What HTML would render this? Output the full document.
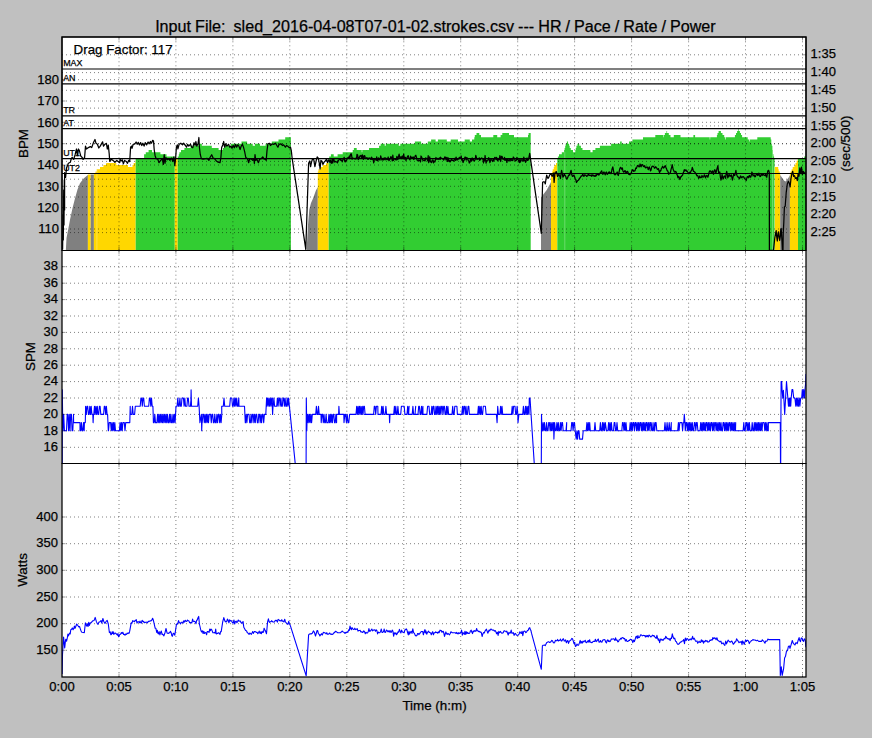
<!DOCTYPE html>
<html lang="en"><head><meta charset="utf-8"><title>HR / Pace / Rate / Power</title>
<style>html,body{margin:0;padding:0;background:#c0c0c0;}body{width:872px;height:738px;overflow:hidden;}</style></head>
<body>
<svg width="872" height="738" viewBox="0 0 872 738" style="display:block;font-family:'Liberation Sans', Arial, Helvetica, sans-serif">
<rect width="872" height="738" fill="#c0c0c0"/>
<defs><clipPath id="c1"><rect x="62.0" y="37.0" width="744.0" height="213.5"/></clipPath><clipPath id="c2"><rect x="62.0" y="250.33" width="744.0" height="213.6"/></clipPath><clipPath id="c3"><rect x="62.0" y="463.67" width="744.0" height="213.3"/></clipPath></defs>
<rect x="62.0" y="37.0" width="744.0" height="640.0" fill="#fff"/>
<g clip-path="url(#c1)">
<polygon points="65.9,251.3 65.9,249.1 66.5,238 68.4,228.4 70.2,218.7 72.6,207.7 75.1,198 77.5,189.4 80,183.3 83.6,178.4 87.3,175.4 87.9,174.8 87.9,251.3" fill="#808080"/>
<polygon points="87.9,251.3 87.9,174.6 90.7,174.6 90.7,251.3" fill="#ffd700"/>
<polygon points="90.7,251.3 90.7,174.6 93.9,174.6 93.9,251.3" fill="#808080"/>
<polygon points="93.9,251.3 93.9,173.5 95.5,173.5 95.5,171.4 96.7,171.4 96.7,169.3 100,169.3 100,167.1 103.4,167.1 103.4,165 106.2,165 106.2,162.9 116.3,162.9 116.3,165 128,165 128,167.1 132.5,167.1 132.5,165 133.6,165 133.6,162.9 135.3,162.9 135.3,160.7 135.7,160.7 135.7,251.3" fill="#ffd700"/>
<polygon points="135.7,251.3 135.7,158.6 144.1,158.6 144.1,154.3 145.8,154.3 145.8,152.2 148.6,152.2 148.6,150.1 152,150.1 152,152.2 160.4,152.2 160.4,154.3 166.5,154.3 166.5,156.5 174.8,156.5 174.8,251.3" fill="#32cd32"/>
<polygon points="174.8,251.3 174.8,158.7 177.7,158.7 177.7,251.3" fill="#ffd700"/>
<polygon points="177.7,251.3 177.7,156.5 178.8,156.5 178.8,154.3 179.4,154.3 179.4,152.2 181,152.2 181,150.1 184.4,150.1 184.4,147.9 190.6,147.9 190.6,145.8 198.4,145.8 198.4,143.7 201.8,143.7 201.8,145.8 211.8,145.8 211.8,147.9 218.6,147.9 218.6,150.1 223,150.1 223,147.9 224.7,147.9 224.7,145.8 230.9,145.8 230.9,143.7 241.5,143.7 241.5,141.5 247.1,141.5 247.1,143.7 252.7,143.7 252.7,145.8 255,145.8 255,143.7 260,143.7 260,145.8 265.6,145.8 265.6,143.7 271.8,143.7 271.8,141.5 278.5,141.5 278.5,139.4 285.2,139.4 285.2,137.3 290.9,137.3 290.9,251.3" fill="#32cd32"/>
<polygon points="306.7,251.3 306.7,248.3 308,225 309.3,209.5 311,203 312.8,199 316,190.2 317.8,187 317.8,251.3" fill="#808080"/>
<polygon points="317.8,251.3 317.8,171.4 318.4,171.4 318.4,169.3 320.6,169.3 320.6,167.1 322.8,167.1 322.8,165 326.2,165 326.2,162.9 328.7,162.9 328.7,251.3" fill="#ffd700"/>
<polygon points="328.7,251.3 328.7,158.6 329.2,158.6 329.2,156.5 330.9,156.5 330.9,154.3 333.7,154.3 333.7,156.5 337.6,156.5 337.6,154.3 342.7,154.3 342.7,152.2 352.7,152.2 352.7,150.1 353.9,150.1 353.9,147.9 356.7,147.9 356.7,150.1 361.7,150.1 361.7,152.2 362.3,152.2 362.3,150.1 369,150.1 369,147.9 379.1,147.9 379.1,145.8 380.7,145.8 380.7,143.7 384.7,143.7 384.7,145.8 385.8,145.8 385.8,143.7 398.7,143.7 398.7,145.8 400.3,145.8 400.3,143.7 414.9,143.7 414.9,141.5 421.1,141.5 421.1,143.7 427.8,143.7 427.8,141.5 431.1,141.5 431.1,139.4 435.6,139.4 435.6,141.5 437.9,141.5 437.9,139.4 446.8,139.4 446.8,141.5 450.7,141.5 450.7,139.4 458,139.4 458,141.5 464.7,141.5 464.7,139.4 469.8,139.4 469.8,141.5 472,141.5 472,139.4 474.3,139.4 474.3,137.3 474.8,137.3 474.8,135.1 476.5,135.1 476.5,133 479.3,133 479.3,135.1 481,135.1 481,137.3 493.3,137.3 493.3,135.1 497.2,135.1 497.2,137.3 500.6,137.3 500.6,135.1 502.3,135.1 502.3,133 509,133 509,135.1 514,135.1 514,137.3 528,137.3 528,135.1 528.6,135.1 528.6,133 530.7,133 530.7,251.3" fill="#32cd32"/>
<polygon points="541,251.3 541,197.4 544,193.4 546.7,190 550,183.9 551,182 551,251.3" fill="#808080"/>
<polygon points="551,251.3 551,173.5 552.1,173.5 552.1,171.4 552.7,171.4 552.7,169.3 553.8,169.3 553.8,167.1 554.4,167.1 554.4,165 556,165 556,162.9 557.2,162.9 557.2,160.7 557.2,160.7 557.2,251.3" fill="#ffd700"/>
<polygon points="557.3,251.3 557.3,158.6 557.9,158.6 557.9,156.5 559,156.5 559,154.3 561.8,154.3 561.8,152.2 564.1,152.2 564.1,150.1 564.6,150.1 564.6,147.9 565.2,147.9 565.2,145.8 565.7,145.8 565.7,143.7 566.9,143.7 566.9,141.5 568,141.5 568,143.7 569.1,143.7 569.1,145.8 569.7,145.8 569.7,147.9 570.8,147.9 570.8,150.1 573,150.1 573,152.2 575.3,152.2 575.3,150.1 575.8,150.1 575.8,147.9 576.4,147.9 576.4,145.8 577.5,145.8 577.5,143.7 579.2,143.7 579.2,145.8 580.9,145.8 580.9,147.9 582.5,147.9 582.5,150.1 590.4,150.1 590.4,152.2 592.6,152.2 592.6,150.1 595.4,150.1 595.4,147.9 599.9,147.9 599.9,145.8 611.1,145.8 611.1,143.7 620.1,143.7 620.1,141.5 621.7,141.5 621.7,143.7 629,143.7 629,141.5 632.4,141.5 632.4,139.4 643,139.4 643,137.3 655.3,137.3 655.3,135.1 663.2,135.1 663.2,137.3 663.7,137.3 663.7,135.1 664.9,135.1 664.9,133 666.5,133 666.5,130.9 667.1,130.9 667.1,133 668.8,133 668.8,135.1 670.5,135.1 670.5,137.3 673.8,137.3 673.8,135.1 680.5,135.1 680.5,137.3 693.4,137.3 693.4,135.1 695.1,135.1 695.1,137.3 709.7,137.3 709.7,139.4 710.2,139.4 710.2,137.3 716.9,137.3 716.9,135.1 717.5,135.1 717.5,133 718.6,133 718.6,130.9 720.9,130.9 720.9,133 722.5,133 722.5,135.1 724.2,135.1 724.2,137.3 725.3,137.3 725.3,139.4 725.9,139.4 725.9,137.3 734.9,137.3 734.9,135.1 736,135.1 736,133 737.1,133 737.1,130.9 738.2,130.9 738.2,128.7 738.8,128.7 738.8,130.9 739.9,130.9 739.9,133 741,133 741,135.1 742.1,135.1 742.1,137.3 747.7,137.3 747.7,139.4 749.4,139.4 749.4,141.5 750,141.5 750,139.4 757.3,139.4 757.3,137.3 770.7,137.3 770.7,139.4 771.3,139.4 771.3,143.7 771.8,143.7 771.8,145.8 772.4,145.8 772.4,150.1 772.9,150.1 772.9,154.3 773.5,154.3 773.5,156.5 774.1,156.5 774.1,158.6 774.7,158.6 774.7,251.3" fill="#32cd32"/>
<polygon points="774.8,251.3 774.8,167.1 778.2,167.1 778.2,169.3 778.7,169.3 778.7,171.4 779.8,171.4 779.8,173.5 780.2,173.5 780.2,251.3" fill="#ffd700"/>
<polygon points="780.2,251.3 780.2,175 784.2,180.7 785.6,181.6 789,177 789.9,175 789.9,251.3" fill="#808080"/>
<polygon points="789.9,251.3 789.9,173.5 790.5,173.5 790.5,171.4 791.6,171.4 791.6,169.3 792.7,169.3 792.7,167.1 794.4,167.1 794.4,165 795.5,165 795.5,162.9 796.6,162.9 796.6,160.7 797.7,160.7 797.7,158.6 798,158.6 798,251.3" fill="#ffd700"/>
<polygon points="798,251.3 798,158.6 804.2,158.6 804.2,156.5 806,156.5 806,251.3" fill="#32cd32"/>
<path d="M564.8 152V251M772.5 150V251M774.3 160V251M96.9 170V251" stroke="#fff" stroke-opacity="0.4" stroke-width="0.7" fill="none"/>
</g>
<path d="M62.0 229H806.0" stroke="#000" stroke-width="0.5" stroke-dasharray="1 3" fill="none"/>
<path d="M62.0 207.7H806.0" stroke="#000" stroke-width="0.5" stroke-dasharray="1 3" fill="none"/>
<path d="M62.0 186.3H806.0" stroke="#000" stroke-width="0.5" stroke-dasharray="1 3" fill="none"/>
<path d="M62.0 165H806.0" stroke="#000" stroke-width="0.5" stroke-dasharray="1 3" fill="none"/>
<path d="M62.0 143.7H806.0" stroke="#000" stroke-width="0.5" stroke-dasharray="1 3" fill="none"/>
<path d="M62.0 122.3H806.0" stroke="#000" stroke-width="0.5" stroke-dasharray="1 3" fill="none"/>
<path d="M62.0 101H806.0" stroke="#000" stroke-width="0.5" stroke-dasharray="1 3" fill="none"/>
<path d="M62.0 79.7H806.0" stroke="#000" stroke-width="0.5" stroke-dasharray="1 3" fill="none"/>
<path d="M62.0 54.8H806.0" stroke="#000" stroke-width="0.5" stroke-dasharray="1 3" fill="none"/>
<path d="M62.0 72.6H806.0" stroke="#000" stroke-width="0.5" stroke-dasharray="1 3" fill="none"/>
<path d="M62.0 90.3H806.0" stroke="#000" stroke-width="0.5" stroke-dasharray="1 3" fill="none"/>
<path d="M62.0 108.1H806.0" stroke="#000" stroke-width="0.5" stroke-dasharray="1 3" fill="none"/>
<path d="M62.0 125.9H806.0" stroke="#000" stroke-width="0.5" stroke-dasharray="1 3" fill="none"/>
<path d="M62.0 143.7H806.0" stroke="#000" stroke-width="0.5" stroke-dasharray="1 3" fill="none"/>
<path d="M62.0 161.4H806.0" stroke="#000" stroke-width="0.5" stroke-dasharray="1 3" fill="none"/>
<path d="M62.0 179.2H806.0" stroke="#000" stroke-width="0.5" stroke-dasharray="1 3" fill="none"/>
<path d="M62.0 197H806.0" stroke="#000" stroke-width="0.5" stroke-dasharray="1 3" fill="none"/>
<path d="M62.0 214.8H806.0" stroke="#000" stroke-width="0.5" stroke-dasharray="1 3" fill="none"/>
<path d="M62.0 232.6H806.0" stroke="#000" stroke-width="0.5" stroke-dasharray="1 3" fill="none"/>
<path d="M119 250.3V37" stroke="#000" stroke-width="0.5" stroke-dasharray="1 3" fill="none"/>
<path d="M175.9 250.3V37" stroke="#000" stroke-width="0.5" stroke-dasharray="1 3" fill="none"/>
<path d="M232.9 250.3V37" stroke="#000" stroke-width="0.5" stroke-dasharray="1 3" fill="none"/>
<path d="M289.8 250.3V37" stroke="#000" stroke-width="0.5" stroke-dasharray="1 3" fill="none"/>
<path d="M346.8 250.3V37" stroke="#000" stroke-width="0.5" stroke-dasharray="1 3" fill="none"/>
<path d="M403.8 250.3V37" stroke="#000" stroke-width="0.5" stroke-dasharray="1 3" fill="none"/>
<path d="M460.7 250.3V37" stroke="#000" stroke-width="0.5" stroke-dasharray="1 3" fill="none"/>
<path d="M517.7 250.3V37" stroke="#000" stroke-width="0.5" stroke-dasharray="1 3" fill="none"/>
<path d="M574.6 250.3V37" stroke="#000" stroke-width="0.5" stroke-dasharray="1 3" fill="none"/>
<path d="M631.6 250.3V37" stroke="#000" stroke-width="0.5" stroke-dasharray="1 3" fill="none"/>
<path d="M688.6 250.3V37" stroke="#000" stroke-width="0.5" stroke-dasharray="1 3" fill="none"/>
<path d="M745.5 250.3V37" stroke="#000" stroke-width="0.5" stroke-dasharray="1 3" fill="none"/>
<path d="M802.5 250.3V37" stroke="#000" stroke-width="0.5" stroke-dasharray="1 3" fill="none"/>
<g stroke="#000" stroke-width="1.2" fill="none">
<path d="M62.0 69H806.0"/>
<path d="M62.0 83.9H806.0"/>
<path d="M62.0 115.9H806.0"/>
<path d="M62.0 128.7H806.0"/>
<path d="M62.0 158.6H806.0"/>
<path d="M62.0 173.5H806.0"/>
</g>
<polyline clip-path="url(#c1)" points="62.6,249.5 63,215 63.3,240 63.7,190 64,225 64.3,180 64.6,210 64.6,172.7 65.6,177.4 66.5,168 68.4,163.2 70.3,162.3 71.3,158.5 72.2,157.5 73.7,159.4 75.1,154.7 76.5,149 77.4,155.6 78.4,149 79.3,150.4 80.8,156.1 82.2,157.5 83.1,159.4 84.6,157.5 85.5,146.1 86.5,149 88.4,147.6 90.3,146.6 91.7,147.6 93.6,142.3 95,139.5 96,143.3 97.4,144.2 98.8,148 100.2,146.1 102.6,141.9 103.5,146.1 105,144.2 106.4,143.3 107.3,149 108.3,145.2 109.2,153.7 109.7,161.3 111.1,159.4 113,160.4 114.9,162.3 116.8,160.4 119.7,162.7 120,159.2 121.1,161 122.3,159.8 123.4,163.8 124.6,160.4 126.3,161.5 127.5,163.3 128.6,160.4 129.7,161.5 130.6,147.2 131.5,146.1 132,148.3 133.2,144.3 134.9,143.8 136.1,142 137.2,144.3 138.3,142.4 139.5,144.9 140.6,142.6 141.8,145.5 142.9,143.2 144.1,146.1 145.2,142.6 146.6,144.9 148.1,142 149.2,143.8 150.4,141.5 151.5,143.2 152.7,140.3 153.5,140.9 154.2,149.5 155,155.2 156.1,158.7 157.8,159.2 159,162.7 160.7,160.4 162.4,158.7 163.3,164.4 164.2,154.7 165,163.3 165.9,157.5 167.2,159.8 168.7,158.7 169.9,160.4 171.6,158.1 172.8,161.5 173.9,156.9 174.8,165.6 175.6,158.7 176.4,147.2 177.3,144.9 177.9,148.9 179.1,144.3 180.8,143.2 182.5,144.9 183.6,143.2 185.4,145.5 186.5,147.2 187.7,144.3 188.8,146.1 190.5,144.3 191.7,147.2 192.8,147.8 194,142.6 195.1,145.5 195.9,141.5 196.8,146.1 198,143.8 198.9,137.5 199.4,147.2 200.3,154.7 201.4,158.7 203.1,159.2 205.4,158.7 207.2,158.4 208.9,160.4 210,157.5 211.7,154.7 213.1,158.1 214.6,158.7 216.3,161 218.1,162.1 220,162.7 220.9,157.5 221.7,147.2 222.9,144.9 223.7,141.5 224.6,147.2 225.7,143.8 226.9,146.1 228.6,144.3 229.7,147.2 230.9,146.1 232,148.3 233.2,145.5 234.3,147.8 235.5,144.3 236.6,147.2 237.8,144.9 238.9,146.1 240.1,149.5 241.2,146.1 242.4,144.3 243.5,147.2 244.7,151.8 245.8,157.5 247.5,158.7 248.7,162.7 249.6,159.2 251,158.7 252.7,160.4 253.8,158.7 254.4,163.3 255,154.7 255.8,160.4 256.7,158.7 258.4,162.7 259.6,159.2 261.3,158.7 262.7,156.9 264.2,159.2 265.3,158.7 266.2,160.4 267,150.6 267.9,143.8 269.3,143.2 270.5,145.5 272.2,143.8 273.9,144.3 275.6,143.2 276.8,145.5 277.9,147.2 279.1,144.3 280.8,143.8 282.5,145.5 283.6,144.9 285.4,147.2 286.5,145.5 288.2,146.6 289.4,147.8 290.5,147.2 291.3,150.6 292.2,158.7 305.8,249.3 308.6,163.3 309.7,161 310.6,166.7 311.5,162.1 312.6,158.7 313.8,159.8 314.9,166.7 316.1,161 317.2,156.9 318.3,158.1 319.5,164.4 320.1,169 320.9,160.4 321.8,161 322.9,164.4 324.1,162.1 325.2,161 326.6,159.2 327.5,162.7 328.7,159.8 329.2,161 329.9,162.3 330.3,160 330.7,161.2 331.3,163.3 331.8,162 332.2,159 332.7,163 333.2,158.9 333.8,158.8 334.4,162 335.1,161.3 335.7,161.8 336.2,161.8 336.9,161.9 337.5,162.8 338.1,160.2 338.5,160.4 339,159.8 339.6,158.8 340.2,158.9 340.9,160.4 341.6,160 342.2,161.9 342.9,159.6 343.7,158.4 344.2,157.3 344.6,160.9 345.2,161.9 345.9,160.2 346.5,160.6 347.2,158.6 347.9,157.7 348.6,158 349.3,156.2 349.8,158.7 350.4,154.9 351.2,153.7 351.7,155.9 352.1,159.2 352.7,158.1 353.1,158.3 353.8,158.4 354.4,158.4 355.1,159 355.8,158.2 356.5,158.6 357,154.3 357.6,155 358.3,159.6 358.8,157.5 359.3,158 359.9,155.9 360.3,156.2 360.9,155.5 361.7,158.4 362.3,154.8 363,156.8 363.4,159.4 364.2,155.6 364.9,156.1 365.3,158.5 366,158.2 366.5,158 367,157.6 367.4,158.5 367.9,159.4 368.3,159.2 369,157.8 369.5,158 370.1,158.1 370.8,159.4 371.6,157.1 372,159.3 372.5,158.3 373.2,160 373.7,162.8 374.3,159.5 374.8,158.5 375.4,158.7 376.2,160.4 376.7,156.8 377.2,160 377.8,160.9 378.5,157.9 379.2,159.4 380,160 380.7,155.9 381.4,158.5 382,160.1 382.4,159.4 382.9,158.4 383.6,159.9 384.3,157.8 385.1,159.8 385.6,157.9 386.1,158.7 386.8,159.5 387.5,159.5 388.2,157 388.9,160.6 389.6,159.8 390.3,158.6 390.8,156.7 391.5,157.1 392.3,160.9 392.8,155.2 393.5,160.4 394,158.7 394.7,158.6 395.5,159.6 396.2,160 396.9,156.3 397.4,159 397.8,159.6 398.4,156.8 399.1,154.2 399.9,158.4 400.4,157 400.5,158.4 401.1,156.9 401.6,158.7 402.3,156 403,158.6 403.7,154.2 404.3,159.1 404.9,157.2 405.5,157.6 406,160.7 406.5,158 407.1,157.7 407.6,156.2 408.2,155.7 408.7,157.5 409.3,158.6 410,159.9 410.6,156.2 411.3,157.8 411.9,157.4 412.5,157.7 413.2,157 413.8,159.5 414.5,157.9 415.3,155.8 415.8,155.3 416.5,157.4 417,160 417.5,160 418,160.9 418.7,159.8 419.4,160.2 420.1,160.9 420.5,161.9 421,156 421.8,157.4 422.6,160.1 423.3,160 423.9,160.7 424.4,159.8 425.1,160.8 425.6,157.9 426,159 426.5,158.3 427,158.4 427.7,160.8 428.2,155.7 428.7,162.6 429.2,160.6 429.7,156.8 430.4,161.5 430.9,162 431.5,162.7 432.2,160.2 432.9,159.9 433.5,162.9 434.1,161 434.8,161.9 435.3,160.7 436,157.5 436.6,159.2 437.4,158.5 438,159.3 438.5,159.2 438.9,159 439.4,157.8 440.1,159.5 440.6,157.2 441.2,158.2 441.6,158.3 442.3,158.6 442.9,159 443.7,160.1 444.1,159.2 444.7,157 445.4,157.2 446.1,160 446.9,157.3 447.6,161.5 448.2,157.9 448.6,160 449.1,161.6 449.6,160.4 450.1,161.9 450.8,160.8 451.5,159 452,160.4 452.6,160.1 453.1,160.6 453.9,161.1 454.4,158.7 455.2,158.4 455.6,160.4 456.1,157.1 456.6,159.2 457.2,160.1 457.7,158.9 458.2,159.2 458.8,159 459.3,157.3 460,158 460.6,158.4 461.2,156 461.7,160.2 462.4,159.4 463.1,162.5 463.8,160.6 464.4,159.6 464.9,157.1 465.5,157.1 466.2,160.2 466.9,157.5 467.6,158.8 468.3,160.6 468.8,161 469.3,163 469.9,162.5 470.6,158.9 471.2,158.8 471.6,161.2 472.2,157.8 472.8,159.9 473.5,159.6 474,161.1 474.7,160.4 475.2,159.5 475.8,155.3 476.3,157.1 477,159.7 477.7,158.9 478.1,158.7 478.7,159.1 479.3,157.8 479.7,160.3 480.4,159.5 481,158.5 481.6,157.9 482.2,158.3 483,159.3 483.5,162.9 483.9,158.7 484.5,161 485.1,155.5 485.6,160.3 486.1,163.1 486.7,160.6 487.5,160.9 487.9,160.2 488.7,157.6 489.3,159.7 489.9,162.6 490.4,161 490.9,159.1 491.5,160 492,160.1 492.7,161.5 493.5,158.8 493.9,160.9 494.7,157.4 495.2,157.4 496,159.6 496.6,157.3 497.1,159.6 497.6,160.8 498.1,160.2 498.8,158.4 499.4,159.7 499.9,155.7 500.7,161.5 501.4,156.4 502.1,156.4 502.7,159 503.4,158.8 504,159.5 504.5,157.3 505,160.4 505.6,159.5 506.1,159.2 506.9,162.6 507.4,159.4 508,159.1 508.6,160.7 509.1,161.1 509.8,159.2 510.6,160.3 511.3,159.4 511.8,160.5 512.3,159.8 512.8,160.7 513.3,157 514,158.5 514.6,158.2 515.1,160.8 515.7,160.9 516.4,160.1 516.9,157.4 517.6,159.5 518.1,159.4 518.7,160.8 519.3,162.6 520,158.7 520.4,162.1 521.2,160.2 521.8,159.7 522.3,159.8 523.1,161.3 523.8,157.1 524.4,160.6 525,160.5 525.6,162.4 526.3,159 527,158 527.4,160.4 528.1,160.2 528.8,158.1 529.7,153.4 530.4,158.1 541.3,233.3 542.6,182.5 542.6,182.5 543.3,181.8 544,181.8 544.6,182.1 545.3,183.9 546,179 546.7,175.1 547.4,177 548,178.5 548.7,177.5 549.4,175.7 550.1,174.3 550.7,174.4 551.4,174.5 552.1,176.4 552.8,174.8 553.5,173 554.1,182.5 555.1,172.4 555.8,172.2 556.4,171.7 557,173.8 557.5,176.4 558.2,174.9 558.9,174.4 559.4,175.9 560,176.1 560.5,178.5 561,174 561.6,170.3 562.3,173.6 562.9,177.1 563.6,176.3 564.3,173.7 565,175.4 565.7,176.4 566.3,178.5 567,179.1 567.7,177.4 568.4,175.7 569,174.9 569.7,175.1 570.4,172.2 571.1,170.3 571.7,174.3 572.4,176.4 573.1,176.2 573.8,175.1 574.5,176.4 575.1,178.5 575.8,179.5 576.5,182.5 577.2,181.5 577.8,180.5 578.5,180.2 579.2,179.1 579.9,178 580.6,177.1 581.1,175.9 581.6,176.1 582.1,175.9 582.6,174.4 583.3,174.9 583.9,176.4 584.6,174.8 585.3,175.1 586,175.4 586.7,176.4 587.2,175.8 587.7,175.8 588.2,174.3 588.7,174.4 589.2,175.3 589.7,175.5 590.2,175.4 590.7,175.7 591.2,175 591.7,176.3 592.2,174.9 592.8,175.1 593.3,176 593.8,175.2 594.3,175.5 594.8,176.4 595.3,176.4 595.8,175 596.3,175.8 596.8,174.4 597.3,174.6 597.8,174.1 598.3,174.3 598.8,175.1 600,173.2 600.6,172.2 601.1,172 601.7,170.9 602.3,173.6 602.9,174.3 603.4,172.4 604,172 604.6,173.2 605.2,174.9 605.7,172.8 606.3,172 606.9,174.2 607.5,174.3 608,173 608.6,172.2 609.2,172.6 609.7,172 610.3,173.1 610.9,173.7 611.5,172.3 612,169.2 612.8,166.9 613.8,172 614.3,174.3 614.9,174.9 615.5,174.5 616.1,173.2 616.6,173.7 617.2,172 617.8,174.7 618.3,175.5 619.3,170.9 619.8,168.8 620.4,167.4 621,167.6 621.6,169.2 622.4,168 622.9,171 623.5,172 624.1,172 624.7,170.9 625.2,170.7 625.8,172.6 626.4,172.6 626.9,171.6 627.5,171.4 628.1,172.6 628.7,174.3 629.4,174.2 630,174.9 630.6,173.3 631.2,173.2 632.1,170.3 632.7,169.6 633.3,170.6 633.8,171.4 634.4,170.8 635,170.9 635.8,168 636.4,168.4 636.9,166.9 637.5,165.5 638.1,165.7 639,166.9 639.6,166.4 640.1,164 641.1,166.9 641.6,165.1 642.2,164.6 642.8,165.1 643.3,166.3 644,166.7 644.7,165.7 645.3,167.6 645.9,168 646.4,167.3 647,166.9 647.6,167.3 648.2,169.7 648.7,168.2 649.3,166.9 649.9,168.6 650.5,170.9 651,170.1 651.6,167.4 652.2,166.2 652.8,166.3 653.3,166.3 653.9,166.9 654.5,168.3 655,168 655.6,166.7 656.2,167.4 656.8,168.1 657.3,169.2 657.9,169.6 658.5,168.6 659.1,171.2 659.6,172.6 660.2,170.7 660.8,170.9 661.4,168.4 661.9,168 662.5,166.5 663.1,166.9 663.6,168.1 664.2,167.4 664.8,166 665.4,165.7 665.9,167.7 666.5,168.6 667.1,170.6 667.7,170.9 668.2,172.2 668.8,174.3 669.4,173.2 670,173.2 670.5,172.2 671.1,169.2 671.7,167.1 672.2,164.6 673.2,169.7 673.7,170.3 674.3,172 675,172.2 675.7,171.4 676.3,172.5 676.8,174.3 677.4,175.5 678,177.8 678.6,176.4 679.1,177.2 679.9,179.5 680.8,176.6 681.4,176.6 682,175.5 682.6,175.2 683.1,173.2 683.7,171.7 684.3,169.7 684.9,171 685.4,170.3 686,169.8 686.6,171.4 687.2,171.1 687.7,172 688.3,172.8 688.9,173.7 690,172 690.6,172.4 691.1,170.9 691.7,170.1 692.3,167.4 692.9,169.2 693.4,171.4 694,171.3 694.6,172.1 695.2,172.6 695.7,173.4 696.3,174.3 696.9,175.8 697.5,175.5 698,176.2 698.6,178.3 699.2,177.8 699.7,176 700.3,177.4 700.9,177.8 701.5,177.3 702,175.5 702.6,176.9 703.2,177.2 703.8,176.3 704.3,174.9 704.9,175.9 705.5,177.8 706.1,176.2 706.6,175.5 707.2,176 707.8,177.2 708.3,175.8 708.9,173.2 709.5,171.1 710.1,170.9 710.6,171.1 711.2,172.6 711.8,172.3 712.4,170.9 712.9,172 713.5,174.3 714.1,171.1 714.7,169.7 715.2,170.4 715.8,173.2 716.4,171.3 716.9,169.2 717.9,165.7 718.7,173.2 719.2,172.2 719.8,172 720.4,177.1 721,180 721.5,178 722.1,174.3 722.7,177.7 723.3,178.9 723.8,176.9 724.4,176 725,176.3 725.6,178.3 726.1,174 726.7,171.4 727.3,174.6 727.8,177.8 728.4,176.5 729,174.3 729.6,175.3 730.1,176.6 730.7,175.2 731.3,174.9 731.9,177.3 732.4,180 733,177.4 733.6,174.3 734.2,175.3 734.7,175.5 735.3,173.4 735.9,170.3 736.4,173.6 737,175.5 737.6,176.7 738.2,177.2 738.7,177.2 739.3,178.9 739.9,178.2 740.5,176 741,176.4 741.6,177.8 742.2,177.3 742.8,176.6 743.3,176.6 743.9,177.2 744.5,178.6 745,178.9 745.6,179.1 746.2,180.6 746.8,178.1 747.3,176.6 747.9,176.6 748.5,177.8 749.1,175.8 749.6,175.5 750.2,177.2 750.8,177.2 751.4,174.8 751.9,172 752.5,173.6 753.1,176 753.6,175.2 754.2,174.9 754.8,176.8 755.4,176.6 755.9,175.2 756.5,173.7 757.1,174 757.7,175.5 758.2,175 758.8,173.2 759.4,175.2 760,176.6 760.5,176.5 761.1,174.3 761.7,174 762.2,175.5 762.8,174.5 763.4,173.7 764,175.3 764.5,175.5 765.1,175.6 765.7,174.3 766.3,176.7 766.8,177.2 767.8,170.9 768.6,170.3 769.3,172.5 769.4,250.4 773.5,250.4 774.8,237.8 775.7,232.9 776.2,230.7 776.7,236.7 777.3,241 778.1,232.9 778.6,231.8 779.2,237.8 779.7,240.5 780.3,236.7 780.8,229.1 781.2,228.5 781.9,239.4 782.4,250 783,250 783.2,234 783.8,222.6 784.4,206.9 784.4,206.9 785.2,206.2 786.2,192.7 787.3,184.1 788.4,181.3 789.4,183.4 790.1,187 791,178.4 791.8,174.2 792.7,171.3 793.6,176.3 794.4,175.6 795.5,178.4 796.5,177.7 797.3,180.6 798.1,174.2 799,176.3 799.8,167.8 800.7,173.5 801.5,167.1 802.4,174.9 803.2,171.3 804.4,172.8 805.5,174.2 806.6,171.3" fill="none" stroke="#000" stroke-width="1.25" stroke-linejoin="round"/>
<path d="M62.0 447.3H806.0" stroke="#000" stroke-width="0.5" stroke-dasharray="1 3" fill="none"/>
<path d="M62.0 430.8H806.0" stroke="#000" stroke-width="0.5" stroke-dasharray="1 3" fill="none"/>
<path d="M62.0 414.4H806.0" stroke="#000" stroke-width="0.5" stroke-dasharray="1 3" fill="none"/>
<path d="M62.0 398H806.0" stroke="#000" stroke-width="0.5" stroke-dasharray="1 3" fill="none"/>
<path d="M62.0 381.6H806.0" stroke="#000" stroke-width="0.5" stroke-dasharray="1 3" fill="none"/>
<path d="M62.0 365.2H806.0" stroke="#000" stroke-width="0.5" stroke-dasharray="1 3" fill="none"/>
<path d="M62.0 348.8H806.0" stroke="#000" stroke-width="0.5" stroke-dasharray="1 3" fill="none"/>
<path d="M62.0 332.4H806.0" stroke="#000" stroke-width="0.5" stroke-dasharray="1 3" fill="none"/>
<path d="M62.0 316H806.0" stroke="#000" stroke-width="0.5" stroke-dasharray="1 3" fill="none"/>
<path d="M62.0 299.6H806.0" stroke="#000" stroke-width="0.5" stroke-dasharray="1 3" fill="none"/>
<path d="M62.0 283.2H806.0" stroke="#000" stroke-width="0.5" stroke-dasharray="1 3" fill="none"/>
<path d="M62.0 266.7H806.0" stroke="#000" stroke-width="0.5" stroke-dasharray="1 3" fill="none"/>
<path d="M119 463.7V250.3" stroke="#000" stroke-width="0.5" stroke-dasharray="1 3" fill="none"/>
<path d="M175.9 463.7V250.3" stroke="#000" stroke-width="0.5" stroke-dasharray="1 3" fill="none"/>
<path d="M232.9 463.7V250.3" stroke="#000" stroke-width="0.5" stroke-dasharray="1 3" fill="none"/>
<path d="M289.8 463.7V250.3" stroke="#000" stroke-width="0.5" stroke-dasharray="1 3" fill="none"/>
<path d="M346.8 463.7V250.3" stroke="#000" stroke-width="0.5" stroke-dasharray="1 3" fill="none"/>
<path d="M403.8 463.7V250.3" stroke="#000" stroke-width="0.5" stroke-dasharray="1 3" fill="none"/>
<path d="M460.7 463.7V250.3" stroke="#000" stroke-width="0.5" stroke-dasharray="1 3" fill="none"/>
<path d="M517.7 463.7V250.3" stroke="#000" stroke-width="0.5" stroke-dasharray="1 3" fill="none"/>
<path d="M574.6 463.7V250.3" stroke="#000" stroke-width="0.5" stroke-dasharray="1 3" fill="none"/>
<path d="M631.6 463.7V250.3" stroke="#000" stroke-width="0.5" stroke-dasharray="1 3" fill="none"/>
<path d="M688.6 463.7V250.3" stroke="#000" stroke-width="0.5" stroke-dasharray="1 3" fill="none"/>
<path d="M745.5 463.7V250.3" stroke="#000" stroke-width="0.5" stroke-dasharray="1 3" fill="none"/>
<path d="M802.5 463.7V250.3" stroke="#000" stroke-width="0.5" stroke-dasharray="1 3" fill="none"/>
<polyline clip-path="url(#c2)" points="62.2,464.2 62.3,389.8 62.8,430.8 63,430.8 63.7,414.4 63.7,414.4 64.4,430.8 64.4,430.8 65.1,430.8 65.8,430.8 65.8,430.8 66.5,430.8 66.5,430.8 67.2,414.4 67.9,414.4 67.9,414.4 68.6,430.8 69.3,414.4 69.3,414.4 70,430.8 70,430.8 70.7,414.4 71.4,414.4 71.4,414.4 72.1,430.8 72.1,430.8 72.8,430.8 72.8,430.8 73.5,414.4 73.6,422.6 80,422.6 80,430.8 80.7,430.8 81.4,422.6 81.4,422.6 82.1,430.8 82.8,430.8 82.8,430.8 83.5,422.6 84.2,430.8 84.2,430.8 84.4,422.6 85.3,422.6 85.6,406.2 86.3,414.4 87,406.2 87,406.2 87.7,406.2 88.4,414.4 88.4,414.4 89.1,414.4 89.1,414.4 89.8,406.2 90.5,414.4 91.2,406.2 91.9,414.4 91.9,414.4 92.8,414.4 93.1,422.6 93.5,414.4 93.8,414.4 94.5,406.2 95.2,414.4 95.9,406.2 96.6,414.4 96.6,414.4 97.3,406.2 98,414.4 98,414.4 98.7,414.4 99.4,406.2 99.4,406.2 100.1,406.2 100.8,414.4 100.8,414.4 101.5,414.4 101.5,414.4 102.2,414.4 102.9,414.4 102.9,414.4 103.6,414.4 103.6,414.4 104.3,406.2 105,406.2 105,406.2 105.7,414.4 105.7,414.4 106.4,406.2 106.4,406.2 107.1,414.4 107.1,414.4 107.6,414.4 108.3,430.8 108.5,430.8 109.2,422.6 109.9,422.6 109.9,422.6 110.6,422.6 110.6,422.6 111.3,430.8 112,422.6 112,422.6 112.7,430.8 113.4,422.6 114.1,430.8 114.1,430.8 114.8,422.6 115.5,430.8 115.2,430.8 118.5,430.8 118.7,430.8 119.4,430.8 120.1,422.6 120.1,422.6 120.8,430.8 120.8,430.8 121.5,422.6 121.5,422.6 122.2,430.8 122.2,430.8 122.9,422.6 122.9,422.6 123.6,422.6 123.6,422.6 124.3,422.6 125,430.8 125,430.8 125.7,422.6 125.7,422.6 126.4,422.6 126.2,422.6 129.8,422.6 130.2,406.2 130.4,414.4 131.1,414.4 131.8,414.4 132.5,406.2 133.2,414.4 133.9,414.4 133.9,414.4 134.6,414.4 135.3,406.2 135.3,406.2 136,406.2 136,406.2 136.7,406.2 136,406.2 138.6,406.2 138.8,406.2 139.5,406.2 139.5,406.2 140.2,406.2 140.9,398 140.9,398 141.6,398 141.6,398 142.3,406.2 142.3,406.2 143,398 143.7,398 144.4,406.2 145,406.2 148.5,406.2 148.7,406.2 149.4,398 149.4,398 150.1,398 150.8,406.2 151.5,398 152.2,406.2 152.2,406.2 152.9,406.2 153.2,414.4 153.4,422.6 154.1,422.6 154.8,414.4 155.5,422.6 155.5,422.6 156.2,422.6 156.2,422.6 156.9,422.6 156.9,422.6 157.6,414.4 158.3,422.6 159,414.4 159,414.4 159.7,422.6 159.7,422.6 160.4,414.4 160.4,414.4 161.1,422.6 161.8,414.4 161.8,414.4 162.5,422.6 162.5,422.6 163.2,414.4 163.2,414.4 163.9,422.6 163.9,422.6 164.6,414.4 165.3,422.6 165.3,422.6 166,414.4 166,414.4 166.7,422.6 167.4,414.4 167.4,414.4 168.1,422.6 168.8,422.6 169.5,414.4 169.5,414.4 170.2,422.6 170.9,414.4 170.9,414.4 171.6,422.6 171.6,422.6 172.3,422.6 173,414.4 173.7,422.6 174.4,414.4 174.4,414.4 175.1,422.6 176,406.2 176.4,406.2 177.1,406.2 177.1,406.2 177.8,398 178.5,406.2 179.2,406.2 179.2,406.2 179.9,398 179.9,398 180.6,406.2 181.3,406.2 182,398 182.7,398 182.7,398 183.4,398 183.4,398 184.1,406.2 184.1,406.2 184.8,398 184.8,398 185.5,406.2 186.2,406.2 186.9,406.2 186.9,406.2 187.6,398 187.6,398 188.3,398 189,406.2 189.7,406.2 189.7,406.2 190.4,406.2 190.4,406.2 191.1,398 190.8,406.2 191.1,389.8 191.5,406.2 191.6,406.2 195.5,406.2 195.6,406.2 196.3,406.2 197,406.2 197,406.2 197.7,406.2 197.7,406.2 198.4,398 199.1,406.2 199.9,422.6 201.4,414.4 201.7,430.8 202,422.6 202.2,422.6 202.9,414.4 203.6,414.4 204.3,422.6 205,414.4 205,414.4 205.7,422.6 206.4,414.4 207.1,422.6 207.1,422.6 207.8,414.4 208.5,422.6 208.5,422.6 209.2,414.4 209.2,414.4 209.9,414.4 210.6,414.4 211.3,422.6 212,414.4 212.7,414.4 213.4,422.6 214.1,422.6 214.8,414.4 214.8,414.4 215.5,422.6 215.5,422.6 216.2,422.6 216.9,414.4 217.6,422.6 217.6,422.6 218.3,414.4 218.3,414.4 219,414.4 219,414.4 219.7,422.6 219.7,422.6 220.4,414.4 220.4,414.4 221.1,422.6 221.8,414.4 221.7,406.2 221.9,406.2 222.6,406.2 223.3,406.2 224,398 224,398 224.7,406.2 225,406.2 229.5,406.2 229.7,406.2 230.4,398 230.4,398 231.1,398 231.1,398 231.8,398 231.8,398 232.5,406.2 232.5,406.2 233.2,406.2 233.9,398 233.9,398 234.6,406.2 235.3,398 235.3,398 236,406.2 236.7,398 237.4,406.2 237.4,406.2 238.1,406.2 238.1,406.2 238.8,398 239,406.2 244.5,406.2 244.9,414.4 245.3,422.6 245.5,422.6 246.2,414.4 246.9,422.6 246.9,422.6 247.6,414.4 247.6,414.4 248.3,414.4 248.3,414.4 249,414.4 249,414.4 249.7,422.6 249.7,422.6 250.4,422.6 251.1,414.4 251.8,422.6 251.8,422.6 252.5,414.4 253.2,414.4 253.9,422.6 253.9,422.6 254.6,414.4 255.3,422.6 256,414.4 256,414.4 256.7,414.4 257.4,422.6 257.4,422.6 258.1,422.6 258.1,422.6 258.8,414.4 258.8,414.4 259.5,414.4 260.2,422.6 260.2,422.6 260.9,414.4 260.9,414.4 261.6,422.6 261.6,422.6 262.3,414.4 262.3,414.4 263,414.4 263.7,422.6 264.4,414.4 264.4,414.4 265.1,414.4 265.8,414.4 265.8,414.4 266.6,398 266.8,406.2 267.5,398 267.5,398 268.2,406.2 268.2,406.2 268.9,398 269.6,406.2 270.3,398 270.3,398 271,406.2 271.7,398 272.4,398 272.3,406.2 272.6,414.4 273,406.2 273.2,406.2 273.9,398 274.6,406.2 274.6,406.2 275.3,406.2 276,406.2 276.7,406.2 277.4,398 277.4,398 278.1,406.2 278.8,398 278.8,398 279.5,398 280.2,406.2 280.2,406.2 280.9,398 280.9,398 281.6,406.2 281.6,406.2 282.3,406.2 283,398 283.7,398 283.7,398 284.4,406.2 285.1,398 285.8,406.2 286.5,406.2 287.2,398 287.9,406.2 288.6,398 289.4,406.2 295.3,464.2 306.1,464.2 306.3,398 306.8,430.8 307.2,414.4 307.4,422.6 308.1,414.4 308.8,422.6 309.5,414.4 310.2,422.6 310.9,414.4 310.9,414.4 311.6,422.6 311.6,422.6 312.3,414.4 312.3,414.4 312.6,414.4 315.5,414.4 315.7,414.4 316.4,406.2 316.4,406.2 317.1,414.4 317.8,414.4 318.5,406.2 319.2,414.4 319,414.4 321,414.4 321.2,422.6 321.9,414.4 322.6,414.4 323.3,422.6 324,414.4 324.7,422.6 325.4,422.6 326.1,414.4 326.1,414.4 326.8,422.6 326.8,422.6 327.5,422.6 327.5,422.6 328.2,422.6 328.2,422.6 328.9,414.4 328.9,414.4 329.6,422.6 329.6,422.6 330.3,414.4 331,422.6 331,422.6 331.7,414.4 331.7,414.4 332.4,422.6 333.1,414.4 333.1,414.4 333.8,414.4 334.5,422.6 335.2,422.6 335.9,414.4 336.6,422.6 336.6,414.4 338.6,414.4 338.9,406.2 339.4,414.4 339.5,414.4 343.8,414.4 344,422.6 344.8,414.4 345.6,414.4 345.6,414.4 346.4,422.6 346.4,422.6 347.2,414.4 348,422.6 348,422.6 348.8,422.6 349.6,414.4 350.4,414.4 351.2,414.4 351.6,414.4 355.8,414.4 356,414.4 356.7,406.2 357.4,414.4 358.1,406.2 358.8,414.4 358.8,414.4 359.5,406.2 359.5,406.2 360.2,414.4 360.2,414.4 360.9,406.2 360.9,406.2 361.6,414.4 361.6,414.4 362.3,406.2 363,414.4 363.7,406.2 364.4,406.2 365.1,414.4 364.6,414.4 372,414.4 372.2,414.4 372.9,414.4 372.9,414.4 373.6,414.4 374.3,406.2 375,406.2 375.7,414.4 376.4,406.2 376.4,406.2 377.1,406.2 377.1,406.2 377.8,406.2 378,414.4 381,414.4 381,414.4 381.7,406.2 381.7,406.2 382.4,414.4 383.1,406.2 383.1,406.2 383.8,414.4 384.5,414.4 384.5,414.4 385.2,414.4 385.2,414.4 385.9,406.2 385.9,406.2 386.6,414.4 389.3,414.4 389.6,422.6 390,414.4 390.1,414.4 392.8,414.4 393,414.4 393.7,414.4 394.4,406.2 394.4,406.2 395.1,414.4 395.8,406.2 396.5,414.4 397.2,414.4 397.9,406.2 397.9,406.2 398.6,414.4 398.6,414.4 399.3,414.4 400,414.4 400.7,414.4 401.4,406.2 402.1,406.2 402.8,406.2 402.8,406.2 403.5,406.2 403.5,406.2 404.2,406.2 404.2,406.2 404.9,414.4 404.9,414.4 405.6,414.4 406.3,414.4 406.3,414.4 407,414.4 407.7,406.2 407.7,406.2 408.4,414.4 408.4,414.4 409.1,406.2 408.6,414.4 411.3,414.4 411.5,414.4 412.2,414.4 412.9,406.2 413.6,414.4 413.6,414.4 414.3,414.4 415,414.4 415,414.4 415.7,406.2 415,414.4 417.8,414.4 418,414.4 418.7,406.2 419.4,406.2 419.4,406.2 420.1,414.4 420.1,414.4 420.8,414.4 420.8,414.4 421.5,406.2 421.5,406.2 422.2,414.4 422.9,406.2 423,414.4 426,414.4 426.9,414.4 427.6,406.2 427.6,406.2 428.3,406.2 428.3,406.2 429,406.2 429,406.2 429.7,414.4 430.4,414.4 431.1,414.4 431.1,414.4 431.8,406.2 432.5,414.4 433.2,406.2 433.9,406.2 433.9,406.2 434.6,414.4 435.3,414.4 435.3,414.4 436,406.2 436.7,414.4 437.4,406.2 437.4,406.2 438.1,414.4 438.8,406.2 439.5,414.4 440.2,406.2 440.9,414.4 440.9,414.4 441.6,406.2 442.3,406.2 443,414.4 443,414.4 443.7,406.2 444.4,406.2 445.1,414.4 445.8,414.4 446.5,406.2 446.5,406.2 447.2,414.4 447.9,406.2 448.6,414.4 449.3,414.4 448.7,414.4 452,414.4 452,414.4 452.7,406.2 452.7,406.2 453.4,414.4 454.1,414.4 454.8,406.2 455.5,406.2 456.2,406.2 456.2,406.2 456.9,406.2 457.4,414.4 461.8,414.4 461.8,414.4 462.5,406.2 462.5,406.2 463.2,414.4 463.9,406.2 464.6,406.2 464.6,406.2 465.3,414.4 466,406.2 466,406.2 466.7,414.4 467.4,414.4 467.4,414.4 468.1,406.2 468.8,406.2 468.8,406.2 469.4,414.4 477,414.4 477,414.4 477.7,414.4 478.4,406.2 479.1,414.4 479.1,414.4 479.8,406.2 480.5,414.4 481.2,406.2 481.9,414.4 481.9,414.4 482.6,414.4 482.6,414.4 483.3,406.2 484,406.2 484,406.2 484.7,406.2 484.7,406.2 485.4,406.2 485.4,406.2 486.1,414.4 486.8,414.4 486.8,414.4 487.5,414.4 486.8,414.4 490.7,414.4 490.7,414.4 491.4,414.4 491.4,414.4 492.1,414.4 492.7,414.4 496.4,414.4 497.1,422.6 497.7,406.2 498.4,414.4 499.9,414.4 500.6,406.2 500.6,406.2 501.3,414.4 501.3,414.4 502,406.2 502,406.2 502.7,414.4 503.2,414.4 510.8,414.4 510.8,414.4 511.5,414.4 511.5,414.4 512.2,406.2 512.2,406.2 512.9,414.4 513.6,406.2 514.3,406.2 515,406.2 515,406.2 515.7,414.4 515.7,414.4 516.4,414.4 517.1,406.2 517.1,406.2 517.8,414.4 518,422.6 518.9,414.4 520.6,414.4 521.3,414.4 522,414.4 522,414.4 522.7,414.4 523.4,406.2 524.1,414.4 524.1,414.4 524.8,414.4 525.5,406.2 525.5,406.2 526.2,414.4 526.9,406.2 526.9,406.2 527.6,414.4 527.6,414.4 528.3,406.2 528.3,406.2 529,414.4 529.3,398 530,398 534.3,464.2 541.3,464.2 541.5,414.4 542,430.8 542.4,430.8 543.1,422.6 543.1,422.6 543.8,430.8 543.8,430.8 544.5,422.6 545.2,430.8 545.9,430.8 546.6,422.6 546.6,422.6 547.3,430.8 548,430.8 548.7,422.6 548.7,422.6 549.4,422.6 549.4,422.6 550.1,430.8 550.1,430.8 550.8,422.6 550.8,422.6 551.5,430.8 552.2,422.6 552.9,430.8 552.9,430.8 553.6,422.6 553.9,439.1 554.6,422.6 555.5,430.8 556.2,430.8 556.2,430.8 556.9,422.6 556.9,422.6 557.6,430.8 558.3,422.6 559,430.8 559.7,430.8 559.7,430.8 560.4,422.6 560.4,422.6 561.1,430.8 561.1,430.8 561.8,422.6 562.5,422.6 563.2,430.8 563.2,430.8 563.9,430.8 563.9,430.8 564.6,430.8 564.6,430.8 565.3,430.8 565.3,430.8 566,430.8 566,430.8 566.7,422.6 566.4,430.8 570.3,430.8 570.3,430.8 571,430.8 571.7,422.6 571.7,422.6 572.4,422.6 572.4,422.6 573.1,430.8 573.1,430.8 573.8,422.6 574.5,422.6 574.5,422.6 575.2,430.8 576.2,439.1 576.9,430.8 576.9,430.8 577.6,439.1 577.6,439.1 578.3,430.8 579,430.8 579.7,439.1 579.7,439.1 580.4,439.1 580.4,439.1 581.1,439.1 581.1,439.1 581.8,439.1 581.8,439.1 582.5,439.1 583.2,430.8 583.2,430.8 583.9,430.8 583.8,430.8 585.5,430.8 585.5,430.8 586.2,430.8 586.2,430.8 586.9,422.6 587.6,430.8 587.6,430.8 588.3,422.6 589,430.8 589.7,422.6 590.3,430.8 593.6,430.8 593.6,430.8 594.3,430.8 595,422.6 595.7,430.8 595.8,430.8 599,430.8 599,430.8 599.7,430.8 599.7,430.8 600.4,422.6 601.1,430.8 601.1,430.8 601.8,430.8 601.8,430.8 602.5,422.6 602.5,422.6 603.2,430.8 603.9,422.6 603.9,422.6 604.6,430.8 604.6,430.8 605.3,422.6 606.5,430.8 607.2,430.8 607.2,430.8 607.9,430.8 608.6,422.6 608.6,422.6 609.3,430.8 610,422.6 610,422.6 610.7,430.8 610.7,430.8 611.4,422.6 612.1,430.8 612.8,430.8 612.8,430.8 613.5,430.8 614.2,422.6 614.2,422.6 614.9,422.6 615.6,430.8 616.3,430.8 616.3,430.8 617,422.6 617,422.6 617.7,430.8 617.8,430.8 621.1,430.8 621.1,430.8 621.8,430.8 622.5,422.6 623.2,422.6 623.9,430.8 623.9,430.8 624.6,422.6 624.6,422.6 625.3,430.8 625.3,430.8 626,422.6 626.7,430.8 626.7,430.8 627.4,430.8 628.1,430.8 628.8,430.8 629.5,430.8 629.5,430.8 630.2,422.6 630.2,422.6 630.9,430.8 630.9,430.8 631.6,422.6 632.3,430.8 632.3,430.8 633,422.6 633,422.6 633.7,422.6 633.7,422.6 634.4,430.8 635.1,422.6 635.8,422.6 636.5,430.8 636.5,430.8 637.2,422.6 637.2,422.6 637.9,430.8 637.9,430.8 638.6,422.6 638.6,422.6 639.3,430.8 639.3,430.8 640,422.6 640.7,422.6 641.4,430.8 642.1,422.6 642.8,430.8 643.5,422.6 643.5,422.6 644.2,430.8 644.2,430.8 644.9,422.6 645.6,430.8 646.3,422.6 646.3,422.6 647,422.6 647,422.6 647.7,430.8 647.7,430.8 648.4,422.6 649.1,430.8 649.8,422.6 649.8,422.6 650.5,422.6 650.5,422.6 651.2,430.8 651.2,430.8 651.9,422.6 652.6,430.8 652.6,430.8 653.3,430.8 654,422.6 654,422.6 654.7,430.8 655.4,422.6 656.1,422.6 656.8,430.8 657.5,430.8 657.5,430.8 658.2,430.8 658.9,430.8 658.9,430.8 659.6,430.8 659.2,430.8 663.6,430.8 663.6,430.8 664.3,430.8 665,422.6 665.7,430.8 665.7,430.8 666.4,430.8 667.1,422.6 667.1,422.6 667.8,430.8 667.8,430.8 668.5,430.8 668.5,430.8 669.2,422.6 669.9,430.8 669.9,430.8 670.6,430.8 671.3,422.6 671.2,430.8 677.7,430.8 677.7,430.8 678.4,422.6 678.4,422.6 679.1,430.8 679.8,422.6 679.8,422.6 680.5,422.6 680.5,422.6 681.2,422.6 681.9,422.6 681.9,422.6 682.6,430.8 683.3,422.6 683.8,422.6 684.3,414.4 684.9,422.6 685.3,430.8 686,422.6 686,422.6 686.7,422.6 687.4,430.8 688.1,422.6 688.8,430.8 688.8,430.8 689.5,422.6 690.2,430.8 690.9,422.6 691.6,430.8 691.6,430.8 692.3,422.6 693,430.8 693.7,430.8 693.7,430.8 694.4,422.6 695.1,422.6 695.1,422.6 695.8,430.8 696.5,422.6 696.5,422.6 697.2,422.6 697.9,430.8 697.9,430.8 698.6,430.8 699.3,430.8 700,430.8 700,430.8 700.7,422.6 700.7,422.6 701.4,430.8 702.1,422.6 702.1,422.6 702.8,430.8 703.5,422.6 704.2,430.8 704.2,430.8 704.9,422.6 705.6,430.8 706.3,422.6 706.3,422.6 707,422.6 707.7,430.8 707.7,430.8 708.4,422.6 709.1,430.8 709.8,422.6 710.5,430.8 710.5,430.8 711.2,422.6 711.2,422.6 711.9,422.6 711.9,422.6 712.6,430.8 712.6,430.8 713.3,422.6 714,430.8 714.7,422.6 714.7,422.6 715.4,422.6 715.4,422.6 716.1,430.8 716.1,430.8 716.8,422.6 716.8,422.6 717.5,430.8 718.2,422.6 718.2,422.6 718.9,430.8 718.9,430.8 719.6,422.6 720.3,430.8 721,422.6 721.7,430.8 721.7,430.8 722.4,430.8 723.1,422.6 723.8,422.6 723.8,422.6 724.5,430.8 725.2,422.6 725.9,430.8 725.9,430.8 726.6,422.6 726.6,422.6 727.3,430.8 728,422.6 728.7,430.8 728.7,430.8 729.4,422.6 729.4,422.6 730.1,422.6 730.1,422.6 730.8,430.8 730.8,430.8 731.5,422.6 731.5,422.6 732.2,430.8 732.2,430.8 732.9,422.6 733.6,430.8 733.6,430.8 734.3,422.6 734.3,422.6 735,430.8 735,430.8 735.7,422.6 735.5,430.8 743.1,430.8 743.1,430.8 743.8,422.6 744.5,430.8 744.5,430.8 745.2,430.8 745.2,430.8 745.9,422.6 746.6,422.6 746.6,422.6 747.3,430.8 748,422.6 748.7,430.8 749.4,422.6 749.4,422.6 750.1,430.8 750.1,430.8 750.8,430.8 750.8,430.8 751.5,430.8 752.2,422.6 752.2,422.6 752.9,430.8 752.9,430.8 753.6,430.8 753.6,430.8 754.3,422.6 755,430.8 755.7,422.6 756.4,430.8 756.4,430.8 757.1,422.6 757.1,422.6 757.8,430.8 758.5,422.6 759.2,430.8 759.9,422.6 760.6,430.8 760.6,430.8 761.3,422.6 761.3,422.6 762,430.8 762.7,422.6 762.7,422.6 763.4,422.6 764.1,422.6 764.8,430.8 764.8,430.8 765.5,422.6 766.2,430.8 766.2,430.8 766.9,422.6 767.6,430.8 767.6,430.8 768.3,430.8 768.4,422.6 780.3,422.6 780.5,464.2 780.7,463.5 781.1,381.5 781.7,381.5 782.1,390.3 782.8,398 783.4,390.3 784.7,414.4 786.5,381.5 788.5,406.3 789.1,398 789.6,406.3 790.1,398 790.7,406.3 791.2,398 792,389.6 792.8,389.6 793.7,398 794.9,398 795.8,406.3 796.4,398 797.2,406.3 797.7,398 798.5,406.3 799.3,398 799.9,406.3 800.7,398 801.7,398 802.3,389.6 803,398 803.7,389.6 804.5,398 805,389.6 805.6,383.6 806,374.1" fill="none" stroke="#0000ff" stroke-width="1.1" stroke-linejoin="round"/>
<path d="M62.0 650.3H806.0" stroke="#000" stroke-width="0.5" stroke-dasharray="1 3" fill="none"/>
<path d="M62.0 623.7H806.0" stroke="#000" stroke-width="0.5" stroke-dasharray="1 3" fill="none"/>
<path d="M62.0 597H806.0" stroke="#000" stroke-width="0.5" stroke-dasharray="1 3" fill="none"/>
<path d="M62.0 570.3H806.0" stroke="#000" stroke-width="0.5" stroke-dasharray="1 3" fill="none"/>
<path d="M62.0 543.7H806.0" stroke="#000" stroke-width="0.5" stroke-dasharray="1 3" fill="none"/>
<path d="M62.0 517H806.0" stroke="#000" stroke-width="0.5" stroke-dasharray="1 3" fill="none"/>
<path d="M119 677V463.7" stroke="#000" stroke-width="0.5" stroke-dasharray="1 3" fill="none"/>
<path d="M175.9 677V463.7" stroke="#000" stroke-width="0.5" stroke-dasharray="1 3" fill="none"/>
<path d="M232.9 677V463.7" stroke="#000" stroke-width="0.5" stroke-dasharray="1 3" fill="none"/>
<path d="M289.8 677V463.7" stroke="#000" stroke-width="0.5" stroke-dasharray="1 3" fill="none"/>
<path d="M346.8 677V463.7" stroke="#000" stroke-width="0.5" stroke-dasharray="1 3" fill="none"/>
<path d="M403.8 677V463.7" stroke="#000" stroke-width="0.5" stroke-dasharray="1 3" fill="none"/>
<path d="M460.7 677V463.7" stroke="#000" stroke-width="0.5" stroke-dasharray="1 3" fill="none"/>
<path d="M517.7 677V463.7" stroke="#000" stroke-width="0.5" stroke-dasharray="1 3" fill="none"/>
<path d="M574.6 677V463.7" stroke="#000" stroke-width="0.5" stroke-dasharray="1 3" fill="none"/>
<path d="M631.6 677V463.7" stroke="#000" stroke-width="0.5" stroke-dasharray="1 3" fill="none"/>
<path d="M688.6 677V463.7" stroke="#000" stroke-width="0.5" stroke-dasharray="1 3" fill="none"/>
<path d="M745.5 677V463.7" stroke="#000" stroke-width="0.5" stroke-dasharray="1 3" fill="none"/>
<path d="M802.5 677V463.7" stroke="#000" stroke-width="0.5" stroke-dasharray="1 3" fill="none"/>
<polyline clip-path="url(#c3)" points="62.1,674.1 62.5,654.5 63.2,643.6 63.6,637 64.3,643.6 64.7,647.9 65.4,641.4 65.8,639.2 66.6,641.2 67.3,637.9 67.9,634.1 68.5,635.9 69.1,634 69.7,633 70.2,633.9 70.8,629.7 71.6,629.3 72.3,627.9 73.1,629.8 73.9,628 74.4,626.1 75,628.4 75.6,627 76.7,624 77.8,625.5 78.9,627 79.6,626.6 80.4,629.1 81,630.7 81.6,632.1 82.1,632.3 84.3,632.7 85.4,622.9 86.2,625 86.9,626.1 87.5,623.7 88.1,626.5 88.7,622.3 89.4,625.4 90.1,622.8 90.9,623 91.6,622.1 92.3,621.3 93,620.8 94.1,620.4 95.2,617.4 96.3,621.4 97.4,623.9 98.1,624.2 98.9,622.1 99.6,622 100.3,621.3 101,620.5 101.8,623.2 102.9,618.5 103.9,621.8 105,623.4 106.1,621.4 107.2,620.3 108.3,624 109.4,632.7 110.2,631.9 110.9,634.8 111.5,634.4 112.1,631.8 112.7,633.5 113.2,631.7 113.8,634.4 114.4,633.2 115.2,633 115.9,633.5 116.7,634.3 117.5,635.2 118,633.5 118.6,636.8 119.2,635.9 119.9,634.3 120.6,634.3 121.4,632.5 122.1,633.4 122.8,632.3 123.6,634.5 124.3,634.3 125,635.3 125.7,633.9 126.5,634.4 127.2,633.1 127.9,633.6 128.5,633 129.1,633.3 129.7,631.2 131.2,622.9 131.9,623.3 132.7,620.6 134.4,621.8 135,620.5 135.6,620.7 136.2,619.6 137,623.1 137.7,621.7 138.8,621.9 139.4,622.7 140,621.1 140.6,622.5 141.3,623.1 142.1,620.4 143.2,621.9 143.7,621.4 144.3,622.6 144.9,622.6 145.7,622.2 146.4,622.1 147.5,622.9 148.1,621.6 148.7,621.3 149.3,621.4 150,620.9 150.8,621 151.9,620 152.6,618.2 153.4,620.3 155.2,628.3 155.9,628.4 156.7,632.4 157.3,630.2 157.8,633.2 158.4,633.9 159.1,631.6 159.9,634.9 160.6,632.5 161.3,631.1 162.1,634.5 162.8,634.3 163.9,635.8 165,632.7 166,628.5 167.1,633.1 168.2,633.5 169,632.9 169.7,632.7 170.4,631.3 171.2,632.8 171.9,635.8 172.5,636.2 173.1,633.5 173.7,633.2 174.8,635.2 176.5,624 177.3,624.3 178,622.4 178.6,620.6 179.2,622.6 179.8,622.8 180.5,623.9 181.3,622.3 182.4,622.2 183.1,623.1 183.8,620.7 184.6,622.1 185.3,620.3 186,621.3 186.7,621.4 187.5,620 188.2,620.8 188.9,620.9 189.7,622.7 190.4,622.6 191.1,622.6 191.8,623 192.6,619.1 193.3,621.3 194,621.6 194.7,621.3 195.5,622.4 196,623.7 196.6,620.5 197.2,620 198,617.7 198.7,616.4 199.4,624 200.9,630.5 201.6,632 202.4,630.8 203.1,633.5 203.8,631.2 204.5,633.5 205.3,632.6 205.9,632.7 206.6,634.8 207.2,631.5 207.9,631.5 208.5,632 209.1,632.4 209.7,629.1 210.3,630.7 211,629 211.8,629.9 212.9,632.7 214,632.7 214.6,632.6 215.1,633.1 215.7,629.1 216.3,634 216.8,633.6 217.5,633.5 218.1,632.9 218.8,632.7 219.4,633.6 220,634.3 220.6,631.5 221.2,631.6 222.7,621.8 223.8,617.6 224.9,621 226,622 226.7,621.5 227.4,619.1 228.2,620.4 228.9,622.8 229.6,619.8 230.3,621 231.1,620.5 231.8,621.4 232.5,622.7 233.2,623.2 234,620 234.7,624 235.4,621.6 236.1,621.1 236.9,622.7 237.6,621.4 238.3,620 239,621.3 239.6,621.1 240.2,620.9 240.8,622.2 241.6,623.3 242.3,622.1 243.1,621.6 243.8,627.2 245.6,630.5 246.5,630.8 247.2,632.5 248,633.1 249.1,634.4 249.8,633 250.5,633.6 251.3,634.3 252,633 252.7,631.6 253.4,633.4 254.2,631.6 254.9,631.6 255.6,631.7 256.3,632.5 257.1,632.2 257.8,633.8 258.5,632.7 259.2,631.1 260,633.4 260.7,631.9 261.4,633.7 262.1,631.3 262.8,632.5 263.5,632.1 264.1,628.2 264.8,629.7 265.4,630.7 266.5,633.8 267.6,621.8 268.4,618.9 269.1,621.6 269.7,622.4 270.3,621.7 270.9,621.7 271.6,620.7 272.3,621.6 273,622 273.8,622 274.5,622 275.2,620.5 276,620.2 276.7,620.7 277.4,622.1 278.1,619.4 278.9,619.7 279.6,620.8 280.3,620.6 281,621.2 281.8,619.7 282.5,621.2 283.2,621.2 283.9,622 284.7,619.2 285.4,621.7 286.1,622.8 286.8,623.2 287.4,624.2 288.1,624.1 288.7,621.4 289.4,623.4 290.5,626.1 306.2,675.8 308.6,634.9 309.3,634.2 310.1,633.8 311.2,633.9 312.3,633.3 313.4,630.9 314.4,632.4 315.5,636 317.1,630.5 317.7,630.5 318.4,633.5 319.1,634.3 319.9,636 319.9,634.9 320.7,635.1 321.5,633.7 322.3,635 323.2,632.6 323.9,632.4 324.6,632.7 325.3,633 326.1,633.9 326.8,632.7 327.5,634.3 328.2,634.3 329,633.7 329.7,633 330.4,634.1 331.2,634.5 331.9,634 332.6,634.4 333.3,633.8 334.1,632.4 334.8,632.6 335.5,631.2 336.2,631.6 337.7,632.7 339.1,632.7 340.6,632.7 341.3,632 342.1,631 342.8,631.7 343.5,632.1 344.2,632.4 345,633.5 345.7,632.4 346.4,632.7 347.1,631.8 347.9,632.3 348.6,629.9 349.3,630.4 350,626 350.7,628.7 351.4,629.7 352,627.5 352.7,628.9 353.4,629.4 354.1,629.5 354.8,628.2 355.6,629.6 356.4,629.2 357.2,628.6 358,631.1 358.8,630.5 359.5,630.5 360.2,630.4 360.9,631.9 361.7,631.7 362.4,632.5 363.1,632.1 363.8,630.9 364.6,631.9 365.3,633.7 366,632.3 366.7,633 367.5,633 368.2,631.8 368.9,628.6 369.7,631.4 370.4,631 371.1,630.2 371.8,629 372.6,630.9 373.3,630.1 374,630 374.7,629.8 375.5,631.2 376.2,629.8 376.9,630.7 377.6,633.9 378.4,632.1 379.1,632.7 379.8,632.7 380.5,631.7 381.3,629 382,632.5 382.7,632.4 383.5,631.6 384.2,629 384.9,632.5 385.6,632.2 386.4,630.1 387.1,630.5 387.8,631.7 388.5,630.9 389.3,632.1 390,630.5 390.7,632.2 391.4,632.2 392.2,630.1 392.9,631 393.6,636.3 394.3,632.7 395.1,633.9 395.8,632.8 396.5,634.7 397.3,633.6 398,631.9 398.7,632.2 399.4,629.4 400.2,631.4 400.9,632.9 401.6,630.1 402.4,632 403.2,632.3 404.1,632.8 404.9,629.8 405.6,629.6 406.2,628.9 406.9,629.9 407.6,632.5 408.3,634.9 409,631.4 409.6,634.1 410.3,632.6 411.1,631.3 412,633.4 412.8,628.9 413.6,632.6 414.4,633.4 415.2,635.3 416.1,636 416.9,635.6 417.6,633.5 418.3,633.6 419,634.6 419.8,633.2 420.5,632.7 421.2,631.5 422,631.5 422.7,631.6 423.4,634.8 424.1,631.6 424.9,629.6 425.6,632.9 424.7,631.6 425.4,631.2 426,631 426.7,634.2 427.3,632.7 428,631.9 428.6,631.2 429.3,632.4 429.9,632.6 430.6,632.9 431.3,634.7 432,632.8 432.7,631.7 433.4,634.8 434.2,632.8 434.9,632.8 435.6,631.9 436.3,632.6 437.1,632.3 437.8,633.3 438.5,631.8 439.2,632.6 440,630.1 440.6,630.8 441.3,630.5 441.9,632.3 442.6,631.6 443.2,631.3 443.9,633.3 444.5,636.4 445.2,634 445.9,631.9 446.5,633.7 447.2,634.4 448,633.4 448.7,634.2 449.4,634.8 450.1,633.7 450.9,631.8 452.3,632.7 453.8,632.7 455.2,632.7 456,633.5 456.7,632.4 457.4,633.6 458.1,633.9 458.9,632.6 459.6,633.4 460.3,633.3 460.9,632.3 461.6,630.1 462.3,635.1 463,632.6 463.7,633.5 464.3,634.3 465,631.2 465.7,634.5 466.4,631.8 467.1,633.5 467.8,632.4 468.4,633.5 469.1,633.5 469.8,632.8 470.5,630.8 471.2,630.2 471.8,632.1 472.5,633.6 473.2,631 473.9,631.7 474.6,630.6 475.2,631.1 475.9,631.3 476.6,628.5 477.3,630.7 478,630.9 478.6,631.6 479.3,631.2 480,632.2 480.7,631.9 481.4,632.9 482.1,636.5 482.8,634 483.6,632.5 484.3,633 485,631 485.7,630.1 486.4,629.2 487.1,631.1 487.8,633.2 488.5,631.5 489.1,630 489.8,630.8 490.5,629.2 491.2,629 492,629.9 492.8,630.1 493.6,630 494.4,631.1 495.2,630.5 495.9,631.8 496.6,633.8 497.4,632.3 498.1,635.5 498.8,631.4 499.5,632.8 500.3,631.4 501,632.4 501.7,633.1 502.4,633.1 503.2,632.7 503.9,631 504.6,630.7 505.3,631.4 506.1,631.9 506.8,631.1 507.5,633 508.2,635 509,632.2 509.7,633.2 510.4,632.9 511.2,630.1 511.9,633.3 512.6,633.1 513.3,632.6 514.1,635.4 514.8,633.8 515.5,633.4 516.2,634.8 517,635.4 517.7,635.2 518.4,634.9 519.1,634 519.9,631.8 520.6,632.8 521.3,633.5 522.1,631.3 522.8,635.6 523.5,631.9 524.2,631 525,631.3 525.8,632.6 526.6,632 527.4,630.5 528.2,630.2 529,628.2 529.8,627.7 530.3,629.7 530.9,630.4 531.5,633.2 541.3,669.3 542.4,645.8 543.1,645.2 543.8,645.2 544.6,645 545.3,645.6 546,644 546.7,642.7 546.7,642.5 547.5,642.3 548.2,641.8 548.9,641.8 549.7,642.5 550.4,642.2 551.1,641.5 551.8,640.3 552.6,641 553.3,642.6 554,643 554.7,642.3 555.5,640.3 556.2,640.7 556.9,640.7 557.6,639.4 558.4,641 559.1,640.6 559.8,640.3 560.5,639.1 561.3,641.1 562,640.7 562.7,639.2 563.5,638.8 564.2,641 564.9,641 565.6,639.9 566.4,642.8 567.1,641.1 567.8,640.5 568.5,643.4 569.4,641.1 570.2,640.5 571,639.8 571.8,638.4 572.5,638.8 573.3,641.1 574,643.6 574.7,642.3 575.4,646.5 576.2,645.9 577,644 577.8,645.3 578.6,645.1 579.4,642.9 580.2,640.4 580.9,643.3 581.6,641.6 582.3,643.1 583.1,641 583.8,642 584.5,641.2 585.2,640.3 586,642.5 586.7,642.6 587.4,641.6 588.2,640.5 588.9,642.2 589.6,639.7 590.3,642.3 591.1,642.3 591.8,642.7 592.5,642.3 593.2,641.2 594,641.5 594.7,641.4 595.4,639.2 596.1,641.6 596.9,641 597.6,639.9 598.3,639 599,642.1 599.8,641.9 600.5,640.6 601.2,641.9 602,642.1 602.7,640.1 603.4,640 604.1,639.6 604.9,639.7 605.6,641.8 606.5,643 607.1,640.4 607.8,639.8 608.4,641.5 609.1,640.7 609.8,641.7 610.5,641.1 611.3,638.9 612,639.2 612.7,639 613.4,638.8 614.2,639.2 614.9,640.5 615.6,637.9 616.3,640.2 617.1,640 617.8,641.9 618.5,641.6 619.2,639.8 620,639.6 620.7,638.3 621.4,639 622.1,637.5 623,637.7 623.8,638.7 624.6,638.4 625.4,641 626.2,639.6 627.1,641.5 627.9,641.5 628.7,640.6 629.5,640.4 630.3,639.2 631.1,639.6 632,640.1 632.8,642.7 633.6,640.1 634.4,641.6 635.2,639.1 635.9,636.7 636.6,636.3 637.3,638.5 637.9,635.5 638.6,637.8 639.3,637.5 640,636.3 640.7,634.7 641.5,635 642.3,635.9 643.1,635.4 643.9,635.5 644.7,635.5 645.4,636.9 646.1,635.4 646.8,636.8 647.6,635.5 648.3,636.9 649.1,635 649.9,635.9 650.8,637 651.6,636.4 652.4,635.2 653.2,635.9 654,635.6 654.8,636.9 655.5,637.7 656.2,638.5 656.9,635.4 657.6,638.1 658.2,640.1 658.9,638.9 659.6,642.6 660.3,640.1 661,638.9 661.6,640 662.3,639.6 663,640.4 663.7,639.4 664.4,638.4 665.1,638.7 665.7,636.4 666.5,637.4 667.2,638.6 667.9,638.5 668.6,639.2 669.4,638.8 670.1,640.6 670.8,638.2 671.5,638.6 672.3,633.8 673.1,637.1 673.9,638.8 674.7,638.1 675.5,641.1 676.4,641.7 677.2,643.6 678,644.4 678.8,644.1 679.6,643.1 680.4,642.1 681.3,641.9 682.1,641 682.9,641 683.7,639.6 684.5,643.6 685.3,638 686.2,640.6 687,638.4 687.8,638.9 688.6,640.4 689.4,639.8 690.2,638.9 691.1,639.9 691.9,638.6 692.6,636.3 693.3,639.3 694.1,638.2 694.8,639.4 695.5,641.1 696.2,641.2 697,640.9 697.7,643.3 698.4,642.2 699.1,641.2 699.9,642.4 700.6,642.4 701.3,639.8 702.1,641.7 702.8,640.4 703.5,643.2 704.2,641.4 705,641.6 705.7,640.4 706.4,641.2 707.1,640.7 707.9,642.3 708.6,641.7 709.3,641.6 710,640.1 710.8,640.5 711.5,639.7 712.2,640.1 712.9,637.5 713.7,638.8 714.5,637.8 715.3,638.3 716.1,639.7 716.9,637.7 717.8,640.4 718.6,640.7 719.4,641.7 720.2,641.8 720.9,641.1 721.7,643.8 722.4,643.3 723.2,642.9 724,644.5 724.8,645.5 725.7,641.1 726.5,643.9 727.3,642 728.1,640.1 728.9,641.2 729.7,641.9 730.4,642.1 731.1,641.5 731.8,641 732.6,642.8 733.3,644.3 734.1,643.4 734.9,641.7 735.7,641.9 736.6,638.9 737.4,640.2 738.2,641.2 739,642.7 739.8,642 740.5,642.2 741.3,641.3 742,644.7 742.7,640.9 743.5,642.5 744.2,644.4 744.9,642.2 745.6,639.9 746.4,641.5 747.1,640.2 747.8,640.3 748.5,641.1 749.3,643.6 750,642.1 750.7,641.6 751.4,640.5 752.2,640.3 752.9,639.6 753.6,639.9 754.3,640 755.1,640 755.8,640.4 756.5,640.7 757.3,640.2 758.7,641.4 760.2,641.4 761.6,641.4 762.3,639.8 763,640.8 763.7,641 764.3,642.1 765,643.2 765.7,641 766.4,641.2 767.1,640.9 767.8,639.1 768.6,639.5 768.5,639.6 779.7,639.6 780.3,675.4 781.3,666.7 782.2,675.4 783.6,668.6 784.6,658 785.5,656.3 786.5,651.2 787.5,650.6 788.4,646.4 789.2,645.9 790,648.4 791.2,644.4 792.3,640.5 793.3,643.4 794.3,644.4 795,645 795.8,642.8 796.5,642.8 797.2,643.6 798.1,640.5 799.1,637.6 799.7,640.5 800.5,641.6 801.2,638 802,638 802.8,640.5 803.6,641.3 804.3,638.8 805.3,640.3 805.9,647.3" fill="none" stroke="#0000ff" stroke-width="1.1" stroke-linejoin="round"/>
<g stroke="#000" stroke-width="0.5" stroke-opacity="0.8">
<path d="M119 250.3v-3.5M119 37v3.5"/>
<path d="M175.9 250.3v-3.5M175.9 37v3.5"/>
<path d="M232.9 250.3v-3.5M232.9 37v3.5"/>
<path d="M289.8 250.3v-3.5M289.8 37v3.5"/>
<path d="M346.8 250.3v-3.5M346.8 37v3.5"/>
<path d="M403.8 250.3v-3.5M403.8 37v3.5"/>
<path d="M460.7 250.3v-3.5M460.7 37v3.5"/>
<path d="M517.7 250.3v-3.5M517.7 37v3.5"/>
<path d="M574.6 250.3v-3.5M574.6 37v3.5"/>
<path d="M631.6 250.3v-3.5M631.6 37v3.5"/>
<path d="M688.6 250.3v-3.5M688.6 37v3.5"/>
<path d="M745.5 250.3v-3.5M745.5 37v3.5"/>
<path d="M802.5 250.3v-3.5M802.5 37v3.5"/>
<path d="M119 463.7v-3.5M119 250.3v3.5"/>
<path d="M175.9 463.7v-3.5M175.9 250.3v3.5"/>
<path d="M232.9 463.7v-3.5M232.9 250.3v3.5"/>
<path d="M289.8 463.7v-3.5M289.8 250.3v3.5"/>
<path d="M346.8 463.7v-3.5M346.8 250.3v3.5"/>
<path d="M403.8 463.7v-3.5M403.8 250.3v3.5"/>
<path d="M460.7 463.7v-3.5M460.7 250.3v3.5"/>
<path d="M517.7 463.7v-3.5M517.7 250.3v3.5"/>
<path d="M574.6 463.7v-3.5M574.6 250.3v3.5"/>
<path d="M631.6 463.7v-3.5M631.6 250.3v3.5"/>
<path d="M688.6 463.7v-3.5M688.6 250.3v3.5"/>
<path d="M745.5 463.7v-3.5M745.5 250.3v3.5"/>
<path d="M802.5 463.7v-3.5M802.5 250.3v3.5"/>
<path d="M119 677v-3.5M119 463.7v3.5"/>
<path d="M175.9 677v-3.5M175.9 463.7v3.5"/>
<path d="M232.9 677v-3.5M232.9 463.7v3.5"/>
<path d="M289.8 677v-3.5M289.8 463.7v3.5"/>
<path d="M346.8 677v-3.5M346.8 463.7v3.5"/>
<path d="M403.8 677v-3.5M403.8 463.7v3.5"/>
<path d="M460.7 677v-3.5M460.7 463.7v3.5"/>
<path d="M517.7 677v-3.5M517.7 463.7v3.5"/>
<path d="M574.6 677v-3.5M574.6 463.7v3.5"/>
<path d="M631.6 677v-3.5M631.6 463.7v3.5"/>
<path d="M688.6 677v-3.5M688.6 463.7v3.5"/>
<path d="M745.5 677v-3.5M745.5 463.7v3.5"/>
<path d="M802.5 677v-3.5M802.5 463.7v3.5"/>
<path d="M62.0 229h3.5"/>
<path d="M62.0 207.7h3.5"/>
<path d="M62.0 186.3h3.5"/>
<path d="M62.0 165h3.5"/>
<path d="M62.0 143.7h3.5"/>
<path d="M62.0 122.3h3.5"/>
<path d="M62.0 101h3.5"/>
<path d="M62.0 79.7h3.5"/>
<path d="M806.0 54.8h-3.5"/>
<path d="M806.0 72.6h-3.5"/>
<path d="M806.0 90.3h-3.5"/>
<path d="M806.0 108.1h-3.5"/>
<path d="M806.0 125.9h-3.5"/>
<path d="M806.0 143.7h-3.5"/>
<path d="M806.0 161.4h-3.5"/>
<path d="M806.0 179.2h-3.5"/>
<path d="M806.0 197h-3.5"/>
<path d="M806.0 214.8h-3.5"/>
<path d="M806.0 232.6h-3.5"/>
<path d="M62.0 447.3h3.5M806.0 447.3h-3.5"/>
<path d="M62.0 430.8h3.5M806.0 430.8h-3.5"/>
<path d="M62.0 414.4h3.5M806.0 414.4h-3.5"/>
<path d="M62.0 398h3.5M806.0 398h-3.5"/>
<path d="M62.0 381.6h3.5M806.0 381.6h-3.5"/>
<path d="M62.0 365.2h3.5M806.0 365.2h-3.5"/>
<path d="M62.0 348.8h3.5M806.0 348.8h-3.5"/>
<path d="M62.0 332.4h3.5M806.0 332.4h-3.5"/>
<path d="M62.0 316h3.5M806.0 316h-3.5"/>
<path d="M62.0 299.6h3.5M806.0 299.6h-3.5"/>
<path d="M62.0 283.2h3.5M806.0 283.2h-3.5"/>
<path d="M62.0 266.7h3.5M806.0 266.7h-3.5"/>
<path d="M62.0 650.3h3.5M806.0 650.3h-3.5"/>
<path d="M62.0 623.7h3.5M806.0 623.7h-3.5"/>
<path d="M62.0 597h3.5M806.0 597h-3.5"/>
<path d="M62.0 570.3h3.5M806.0 570.3h-3.5"/>
<path d="M62.0 543.7h3.5M806.0 543.7h-3.5"/>
<path d="M62.0 517h3.5M806.0 517h-3.5"/>
</g>
<g stroke="#000" fill="none"><rect x="62.0" y="37.0" width="744.0" height="640.0" stroke-width="1.25"/>
<path d="M62.0 250.3V37H806.0V250.3" stroke-width="1.1"/>
<path d="M61.5 250.5H806.5M61.5 463.5H806.5" stroke-width="1"/></g>
<g fill="#000" font-size="13" stroke="#000" stroke-width="0.25">
<text x="435.4" y="31.6" font-size="16" text-anchor="middle" textLength="560.5" lengthAdjust="spacingAndGlyphs" xml:space="preserve" style="white-space:pre;word-spacing:-0.45px">Input File:  sled_2016-04-08T07-01-02.strokes.csv --- HR / Pace / Rate / Power</text>
<text x="73.6" y="54.1" textLength="99" lengthAdjust="spacingAndGlyphs">Drag Factor: 117</text>
<g font-size="8.9">
<text x="63.2" y="65.7">MAX</text>
<text x="63.2" y="80.6">AN</text>
<text x="63.2" y="113.3">TR</text>
<text x="63.2" y="126.1">AT</text>
<text x="63.2" y="156">UT1</text>
<text x="63.2" y="170.9">UT2</text>
</g>
<g text-anchor="end">
<text x="59" y="233.3">110</text>
<text x="59" y="212">120</text>
<text x="59" y="190.6">130</text>
<text x="59" y="169.3">140</text>
<text x="59" y="148">150</text>
<text x="59" y="126.6">160</text>
<text x="59" y="105.3">170</text>
<text x="59" y="84">180</text>
<text x="58" y="451">16</text>
<text x="58" y="434.5">18</text>
<text x="58" y="418.1">20</text>
<text x="58" y="401.7">22</text>
<text x="58" y="385.3">24</text>
<text x="58" y="368.9">26</text>
<text x="58" y="352.5">28</text>
<text x="58" y="336.1">30</text>
<text x="58" y="319.7">32</text>
<text x="58" y="303.3">34</text>
<text x="58" y="286.9">36</text>
<text x="58" y="270.4">38</text>
<text x="58" y="654">150</text>
<text x="58" y="627.4">200</text>
<text x="58" y="600.7">250</text>
<text x="58" y="574">300</text>
<text x="58" y="547.4">350</text>
<text x="58" y="520.7">400</text>
</g>
<text x="810.6" y="58.4">1:35</text>
<text x="810.6" y="76.2">1:40</text>
<text x="810.6" y="93.9">1:45</text>
<text x="810.6" y="111.7">1:50</text>
<text x="810.6" y="129.5">1:55</text>
<text x="810.6" y="147.3">2:00</text>
<text x="810.6" y="165">2:05</text>
<text x="810.6" y="182.8">2:10</text>
<text x="810.6" y="200.6">2:15</text>
<text x="810.6" y="218.4">2:20</text>
<text x="810.6" y="236.2">2:25</text>
<g text-anchor="middle">
<text x="62" y="691.4">0:00</text>
<text x="119" y="691.4">0:05</text>
<text x="175.9" y="691.4">0:10</text>
<text x="232.9" y="691.4">0:15</text>
<text x="289.8" y="691.4">0:20</text>
<text x="346.8" y="691.4">0:25</text>
<text x="403.8" y="691.4">0:30</text>
<text x="460.7" y="691.4">0:35</text>
<text x="517.7" y="691.4">0:40</text>
<text x="574.6" y="691.4">0:45</text>
<text x="631.6" y="691.4">0:50</text>
<text x="688.6" y="691.4">0:55</text>
<text x="745.5" y="691.4">1:00</text>
<text x="802.5" y="691.4">1:05</text>
<g font-size="13.4">
<text x="434.5" y="709.6">Time (h:m)</text>
<text transform="translate(28,143.5) rotate(-90)">BPM</text>
<text transform="translate(34.6,356.5) rotate(-90)">SPM</text>
<text transform="translate(27.4,570) rotate(-90)">Watts</text>
<text transform="translate(849.5,143.5) rotate(-90)">(sec/500)</text>
</g></g></g>
</svg>
</body></html>
